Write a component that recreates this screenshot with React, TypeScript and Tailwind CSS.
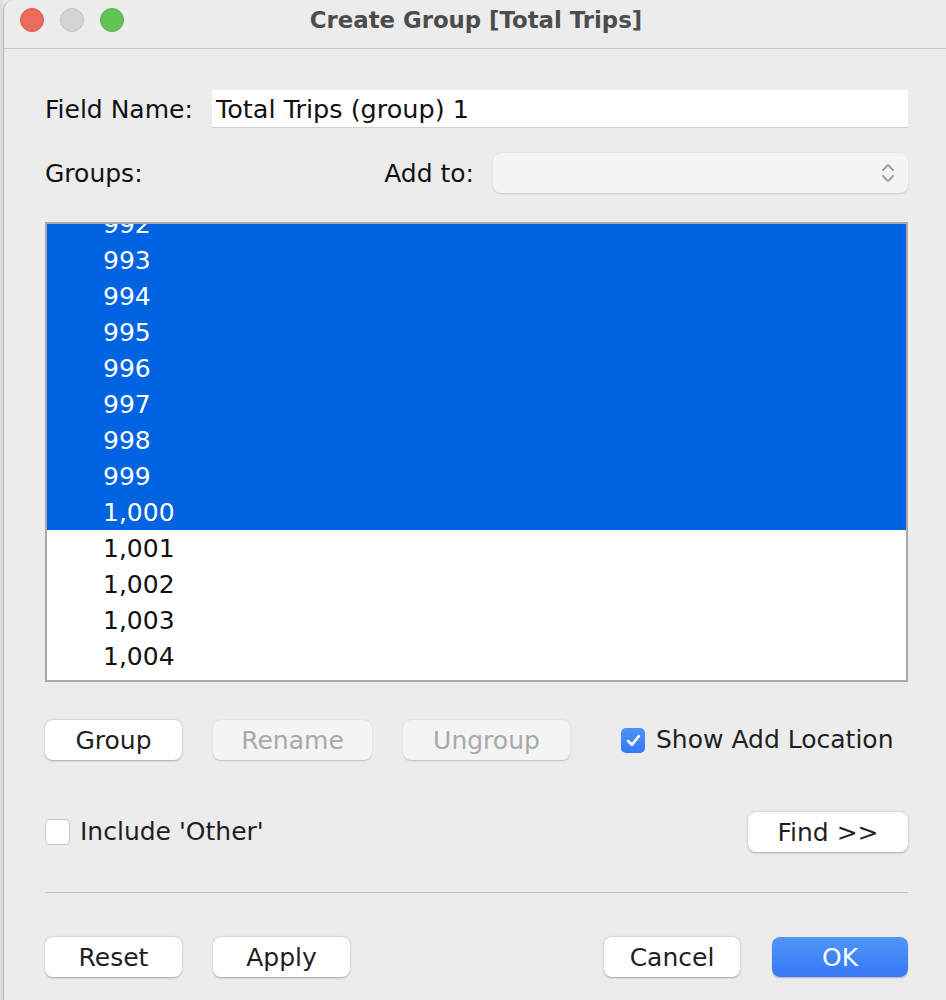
import React from "react";

const font = { fontFamily: '"DejaVu Sans", "Liberation Sans", sans-serif' };

function Btn({ label, w, disabled, primary }: { label: string; w: string; disabled?: boolean; primary?: boolean }) {
  const base = "h-[40px] rounded-[8px] flex items-center justify-center text-[25px] pt-[1px] ";
  if (primary)
    return (
      <div className={base + w + " bg-gradient-to-b from-[#4f95f8] to-[#3478f6] text-white shadow-[0_1px_1.5px_rgba(0,0,0,0.25)]"}>
        {label}
      </div>
    );
  if (disabled)
    return (
      <div className={base + w + " bg-[#f4f4f4] text-[#a9a9a9] shadow-[0_0.5px_1.5px_rgba(0,0,0,0.18)]"}>{label}</div>
    );
  return (
    <div className={base + w + " bg-white text-[#1f1f1f] shadow-[0_0.5px_2px_rgba(0,0,0,0.3)]"}>{label}</div>
  );
}

export default function App() {
  const selected = ["992", "993", "994", "995", "996", "997", "998", "999", "1,000"];
  const unselected = ["1,001", "1,002", "1,003", "1,004"];
  return (
    <div className="w-[946px] h-[1000px] flex bg-[#e6e6e6] overflow-hidden" style={font}>
      <div className="w-[3px] bg-[#dcdcdc]" />
      <div className="flex-1 flex flex-col bg-[#ececec] border-l border-[#b5b5b5] rounded-tl-[10px] overflow-hidden">
        {/* Title bar */}
        <div className="h-[49px] shrink-0 flex items-start border-b border-[#c9c9c9] relative">
          <div className="flex items-center gap-[16px] pl-[16px] pt-[8px]">
            <div className="w-[24px] h-[24px] rounded-full bg-[#ed6a5e] border border-[#d9574b]" />
            <div className="w-[24px] h-[24px] rounded-full bg-[#d4d4d4] border border-[#c2c2c2]" />
            <div className="w-[24px] h-[24px] rounded-full bg-[#61c454] border border-[#50ae43]" />
          </div>
          <div className="absolute left-0 right-0 top-0 h-[40px] flex items-center justify-center text-[22.8px] font-bold text-[#4c4c4c]">
            <span className="ml-[2px]">Create Group [Total Trips]</span>
          </div>
        </div>

        <div className="flex flex-col pl-[41px] pr-[38px]">
          {/* Field name */}
          <div className="mt-[41px] h-[38px] flex items-center">
            <div className="w-[167px] text-[25px] text-[#111] pt-[2px]">Field Name:</div>
            <div className="flex-1 h-[38px] bg-white border-b border-[#cfcfcf] flex items-center pl-[4px] pt-[2px] text-[25.5px] text-[#111]">
              Total Trips (group) 1
            </div>
          </div>

          {/* Groups / Add to */}
          <div className="mt-[25px] h-[40px] flex items-center">
            <div className="flex-1 text-[25px] text-[#111] pt-[2px]">Groups:</div>
            <div className="text-[25px] text-[#111] mr-[19px] pt-[2px]">Add to:</div>
            <div className="w-[415px] h-[40px] rounded-[8px] bg-[#f4f4f4] shadow-[0_0.5px_1.5px_rgba(0,0,0,0.15)] flex items-center justify-end pr-[13px]">
              <svg width="14" height="24" viewBox="0 0 14 24" fill="none" stroke="#a3a3a3" strokeWidth="2.2" strokeLinecap="round" strokeLinejoin="round">
                <path d="M2 9 L7 4 L12 9" />
                <path d="M2 15 L7 20 L12 15" />
              </svg>
            </div>
          </div>

          {/* List */}
          <div className="mt-[29px] h-[460px] border-2 border-[#a9a9a9] bg-white overflow-hidden">
            <div className="mt-[-18px]">
              {selected.map((s) => (
                <div key={s} className="h-[36px] bg-[#0063e1] text-white text-[25px] flex items-center pl-[56px] pt-[1px]">
                  {s}
                </div>
              ))}
              {unselected.map((s) => (
                <div key={s} className="h-[36px] text-[#111] text-[25px] flex items-center pl-[56px] pt-[1px]">
                  {s}
                </div>
              ))}
            </div>
          </div>

          {/* Buttons row */}
          <div className="mt-[38px] h-[40px] flex items-center">
            <Btn label="Group" w="w-[137px]" />
            <div className="ml-[31px]">
              <Btn label="Rename" w="w-[159px]" disabled />
            </div>
            <div className="ml-[31px]">
              <Btn label="Ungroup" w="w-[167px]" disabled />
            </div>
            <div className="ml-[51px] flex items-center">
              <div className="w-[24px] h-[25px] rounded-[5px] bg-gradient-to-b from-[#4c93f8] to-[#3478f6] flex items-center justify-center">
                <svg width="17" height="17" viewBox="0 0 16 16" fill="none" stroke="white" strokeWidth="2.6" strokeLinecap="round" strokeLinejoin="round">
                  <path d="M3 8.5 L6.5 12 L13 4" />
                </svg>
              </div>
              <span className="ml-[11px] text-[25px] text-[#1f1f1f]">Show Add Location</span>
            </div>
          </div>

          {/* Include Other / Find */}
          <div className="mt-[52px] h-[40px] flex items-center">
            <div className="w-[25px] h-[26px] rounded-[5px] bg-white border border-[#c8c8c8]" />
            <span className="ml-[10px] flex-1 text-[25px] text-[#1f1f1f]">Include 'Other'</span>
            <Btn label="Find >>" w="w-[160px]" />
          </div>

          <div className="mt-[40px] h-px bg-[#c6c6c6]" />

          {/* Bottom row */}
          <div className="mt-[44px] h-[40px] flex items-center">
            <Btn label="Reset" w="w-[137px]" />
            <div className="ml-[31px]">
              <Btn label="Apply" w="w-[137px]" />
            </div>
            <div className="flex-1" />
            <Btn label="Cancel" w="w-[136px]" />
            <div className="ml-[32px]">
              <Btn label="OK" w="w-[136px]" primary />
            </div>
          </div>
        </div>
      </div>
    </div>
  );
}
